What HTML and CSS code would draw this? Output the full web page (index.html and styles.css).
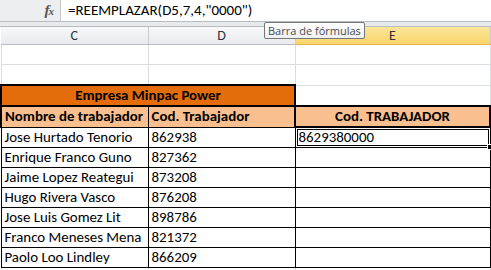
FILE: index.html
```html
<!DOCTYPE html>
<html lang="es">
<head>
<meta charset="utf-8">
<title>Excel</title>
<link rel="stylesheet" href="styles.css">
</head>
<body>
<div class="app">
  <div class="fbar">
    <div class="fbar-left"><span class="fx">f<span class="fx-x">x</span></span></div>
    <div class="fbar-input">=REEMPLAZAR(D5,7,4,"0000")</div>
  </div>
  <div class="gap"></div>
  <table class="sheet">
    <colgroup>
      <col class="c-c"><col class="c-d"><col class="c-e"><col class="c-f">
    </colgroup>
    <tr class="colhdr"><th>C</th><th>D</th><th class="sel">E</th><th></th></tr>
    <tr class="row"><td></td><td></td><td></td><td></td></tr>
    <tr class="row"><td></td><td></td><td></td><td></td></tr>
    <tr class="row"><td colspan="2" class="title">Empresa Minpac Power</td><td class="top-e"></td><td></td></tr>
    <tr class="row"><td class="hd hd-l">Nombre de trabajador</td><td class="hd">Cod. Trabajador</td><td class="hd hd-e">Cod. TRABAJADOR</td><td></td></tr>
    <tr class="row"><td class="b">Jose Hurtado Tenorio</td><td class="b">862938</td><td class="b active">8629380000</td><td></td></tr>
    <tr class="row"><td class="b">Enrique Franco Guno</td><td class="b">827362</td><td class="b"></td><td></td></tr>
    <tr class="row"><td class="b">Jaime Lopez Reategui</td><td class="b">873208</td><td class="b"></td><td></td></tr>
    <tr class="row"><td class="b">Hugo Rivera Vasco</td><td class="b">876208</td><td class="b"></td><td></td></tr>
    <tr class="row"><td class="b">Jose Luis Gomez Lit</td><td class="b">898786</td><td class="b"></td><td></td></tr>
    <tr class="row"><td class="b">Franco Meneses Mena</td><td class="b">821372</td><td class="b"></td><td></td></tr>
    <tr class="row"><td class="b">Paolo Loo Lindley</td><td class="b">866209</td><td class="b"></td><td></td></tr>
    <tr class="row"><td></td><td></td><td></td><td></td></tr>
  </table>
  <div class="tooltip">Barra de fórmulas</div>
</div>
</body>
</html>
```

FILE: styles.css
```css
body {
  margin: 0;
  background: #fff;
  font-family: Carlito, Lato, "Liberation Sans", sans-serif;
  color: #000;
}
.app {
  position: relative;
  width: 491px;
  height: 270px;
  overflow: hidden;
}
.fbar {
  display: flex;
  height: 21px;
  background: #edeef0;
  border-bottom: 1px solid #b7bcc3;
}
.fbar-left {
  width: 60px;
  display: flex;
  justify-content: flex-end;
  align-items: center;
  padding-right: 7px;
  box-sizing: border-box;
}
.fx {
  font-family: "Liberation Serif", serif;
  font-style: italic;
  font-weight: bold;
  font-size: 15px;
  color: #555;
  letter-spacing: -1px;
}
.fx-x {
  font-size: 11px;
}
.fbar-input {
  flex: 1;
  background: #fff;
  border-left: 1px solid #c8c8c8;
  padding-left: 7px;
  font-size: 15px;
  line-height: 21px;
  white-space: nowrap;
}
.gap {
  height: 4px;
  background: #e9eaec;
  border-bottom: 1px solid #b9bdc3;
}
.sheet {
  border-collapse: collapse;
  table-layout: fixed;
  width: 510px;
  font-size: 14.9px;
}
.c-c { width: 147px; }
.c-d { width: 147px; }
.c-e { width: 195px; }
.c-f { width: 21px; }
.colhdr th {
  height: 17px;
  padding: 0;
  font-weight: normal;
  font-size: 14px;
  color: #27313f;
  background: linear-gradient(#f7f8f9, #e8eaed);
  border-right: 1px solid #c9ccd1;
  border-bottom: 1px solid #b9bdc3;
}
.colhdr th.sel {
  background: linear-gradient(#fbe59a, #f8d56b);
  border-bottom: 1px solid #e3b44f;
  color: #333;
}
.row td {
  height: 19px;
  padding: 0 3px;
  border: 1px solid #dadcdd;
  white-space: nowrap;
  overflow: hidden;
  line-height: 19px;
}
.row td.title {
  background: #e46c0a;
  border: 2px solid #000;
  font-weight: bold;
  text-align: center;
}
.row td.hd {
  background: #fabf8f;
  font-weight: bold;
  border: 1px solid #000;
  border-top: 2px solid #000;
}
.row td.hd-l {
  border-left: 2px solid #000;
}
.row td.hd-e {
  border: 2px solid #000;
  text-align: center;
}
.row td.b {
  border: 1px solid #000;
}
.row td.active {
  position: relative;
  overflow: visible;
}
.row td.active::after {
  content: "";
  position: absolute;
  left: 1px;
  top: 1px;
  right: 1px;
  bottom: 1px;
  border: 1px solid #000;
}
.row td.active::before {
  content: "";
  position: absolute;
  right: -3px;
  bottom: -3px;
  width: 4px;
  height: 4px;
  background: #000;
  border: 1px solid #fff;
  z-index: 2;
}
.tooltip {
  position: absolute;
  left: 264px;
  top: 22px;
  height: 15px;
  padding: 0 3px;
  background: linear-gradient(#ffffff, #eef0f4);
  border: 1px solid #767676;
  border-radius: 2px;
  font-family: "Open Sans", "Liberation Sans", sans-serif;
  font-size: 11px;
  line-height: 15px;
  color: #4c4c4c;
  white-space: nowrap;
  z-index: 3;
}
```
